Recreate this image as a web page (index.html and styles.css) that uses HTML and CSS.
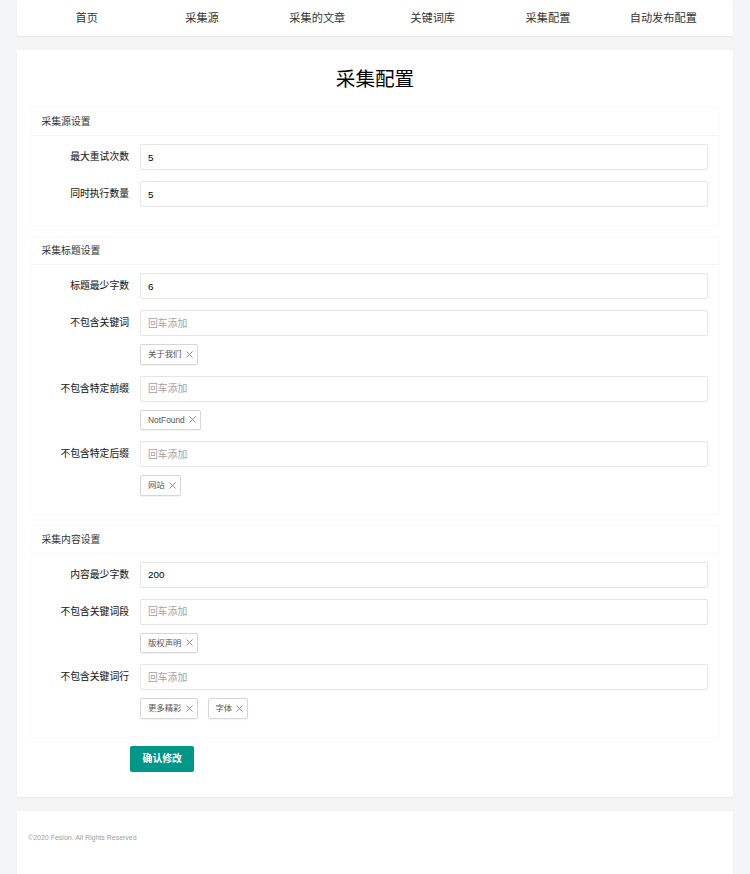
FILE: index.html
```html
<!DOCTYPE html>
<html lang="zh-CN">
<head>
<meta charset="utf-8">
<title>采集配置</title>
<link rel="stylesheet" href="styles.css">
</head>
<body>
<div class="page">
  <nav class="card nav">
    <a class="nav-item">首页</a>
    <a class="nav-item">采集源</a>
    <a class="nav-item">采集的文章</a>
    <a class="nav-item">关键词库</a>
    <a class="nav-item">采集配置</a>
    <a class="nav-item">自动发布配置</a>
  </nav>

  <main class="card main">
    <h1 class="title">采集配置</h1>

    <section class="section">
      <div class="section-head">采集源设置</div>
      <div class="section-body">
        <div class="form-item">
          <label class="label">最大重试次数</label>
          <div class="block"><input class="input" value="5"></div>
        </div>
        <div class="form-item">
          <label class="label">同时执行数量</label>
          <div class="block"><input class="input" value="5"></div>
        </div>
      </div>
    </section>

    <section class="section">
      <div class="section-head">采集标题设置</div>
      <div class="section-body">
        <div class="form-item">
          <label class="label">标题最少字数</label>
          <div class="block"><input class="input" value="6"></div>
        </div>
        <div class="form-item">
          <label class="label">不包含关键词</label>
          <div class="block">
            <input class="input" placeholder="回车添加">
            <div class="tags">
              <span class="tag">关于我们<svg class="x" viewBox="0 0 8 8"><path d="M0.5 0.5L7.5 7.5M7.5 0.5L0.5 7.5"/></svg></span>
            </div>
          </div>
        </div>
        <div class="form-item">
          <label class="label">不包含特定前缀</label>
          <div class="block">
            <input class="input" placeholder="回车添加">
            <div class="tags">
              <span class="tag">NotFound<svg class="x" viewBox="0 0 8 8"><path d="M0.5 0.5L7.5 7.5M7.5 0.5L0.5 7.5"/></svg></span>
            </div>
          </div>
        </div>
        <div class="form-item">
          <label class="label">不包含特定后缀</label>
          <div class="block">
            <input class="input" placeholder="回车添加">
            <div class="tags">
              <span class="tag">网站<svg class="x" viewBox="0 0 8 8"><path d="M0.5 0.5L7.5 7.5M7.5 0.5L0.5 7.5"/></svg></span>
            </div>
          </div>
        </div>
      </div>
    </section>

    <section class="section">
      <div class="section-head">采集内容设置</div>
      <div class="section-body">
        <div class="form-item">
          <label class="label">内容最少字数</label>
          <div class="block"><input class="input" value="200"></div>
        </div>
        <div class="form-item">
          <label class="label">不包含关键词段</label>
          <div class="block">
            <input class="input" placeholder="回车添加">
            <div class="tags">
              <span class="tag">版权声明<svg class="x" viewBox="0 0 8 8"><path d="M0.5 0.5L7.5 7.5M7.5 0.5L0.5 7.5"/></svg></span>
            </div>
          </div>
        </div>
        <div class="form-item">
          <label class="label">不包含关键词行</label>
          <div class="block">
            <input class="input" placeholder="回车添加">
            <div class="tags">
              <span class="tag">更多精彩<svg class="x" viewBox="0 0 8 8"><path d="M0.5 0.5L7.5 7.5M7.5 0.5L0.5 7.5"/></svg></span>
              <span class="tag">字体<svg class="x" viewBox="0 0 8 8"><path d="M0.5 0.5L7.5 7.5M7.5 0.5L0.5 7.5"/></svg></span>
            </div>
          </div>
        </div>
      </div>
    </section>

    <div class="actions">
      <button class="btn">确认修改</button>
    </div>
  </main>

  <footer class="card footer">©2020 Fesion. All Rights Reserved</footer>
</div>
</body>
</html>
```

FILE: styles.css
```css
* { box-sizing: border-box; }

html, body {
  margin: 0;
  padding: 0;
  background: #f4f5f7;
  font-family: "Liberation Sans", "Noto Sans CJK SC", sans-serif;
  color: #333;
}

.page {
  padding: 0 17px;
}

.card {
  background: #fff;
  border-radius: 2px;
  box-shadow: 0 1px 2px 0 rgba(0, 0, 0, 0.06);
}

.nav {
  display: flex;
  height: 36px;
  padding: 0 12px;
}

.nav-item {
  flex: 1;
  text-align: center;
  line-height: 36px;
  font-size: 11.2px;
  color: #333;
  text-decoration: none;
}

.main {
  margin-top: 14px;
  padding: 15px 14px 25px;
}

.title {
  margin: 0 0 15px;
  text-align: center;
  font-size: 19.6px;
  line-height: 28px;
  font-weight: normal;
  color: #000;
}

.section {
  background: #fff;
  border-radius: 2px;
  box-shadow: 0 0 2px 0 rgba(0, 0, 0, 0.07);
  margin-bottom: 12px;
}

.section-head {
  height: 28px;
  line-height: 27px;
  padding: 0 10.5px;
  font-size: 9.8px;
  color: #333;
  border-bottom: 1px solid #f6f6f6;
}

.section-body {
  padding: 8px 0 7px;
}

.form-item {
  display: flex;
  align-items: flex-start;
  margin-bottom: 11px;
}

.label {
  width: 109px;
  flex: none;
  padding-right: 11px;
  text-align: right;
  font-size: 9.8px;
  line-height: 26px;
  color: #1a1a1a;
  font-weight: normal;
  -webkit-text-stroke: 0.08px #1a1a1a;
}

.block {
  flex: 1;
  margin-right: 11px;
}

.input {
  display: block;
  width: 100%;
  height: 26px;
  border: 1px solid #e6e6e6;
  border-radius: 2px;
  padding: 0 7px;
  font-family: inherit;
  font-size: 9.8px;
  color: #000;
  background: #fff;
  outline: none;
}

.input::placeholder {
  color: #a3a3a3;
}

.tags {
  display: flex;
  gap: 10px;
  margin-top: 8px;
  height: 20.5px;
}

.tag {
  display: inline-flex;
  align-items: center;
  gap: 4px;
  height: 20.5px;
  padding: 0 4px 0 7px;
  border: 1px solid #d6d6d6;
  border-radius: 2px;
  box-shadow: 0 1px 1px rgba(0, 0, 0, 0.05);
  font-size: 8.4px;
  line-height: 1;
  color: #555;
  background: #fff;
}

.x {
  width: 7px;
  height: 7px;
  fill: none;
  stroke: #777;
  stroke-width: 0.9;
}

.actions {
  padding-left: 99px;
  margin-top: -3px;
}

.btn {
  display: block;
  height: 26px;
  padding: 0 12.6px;
  border: none;
  border-radius: 2px;
  background: #009688;
  color: #fff;
  font-family: inherit;
  font-size: 9.8px;
  font-weight: bold;
  line-height: 26px;
}

.footer {
  margin-top: 14px;
  height: 80px;
  padding: 23px 11px 0;
  font-size: 7px;
  line-height: 8px;
  color: #a0a0a0;
}
```
